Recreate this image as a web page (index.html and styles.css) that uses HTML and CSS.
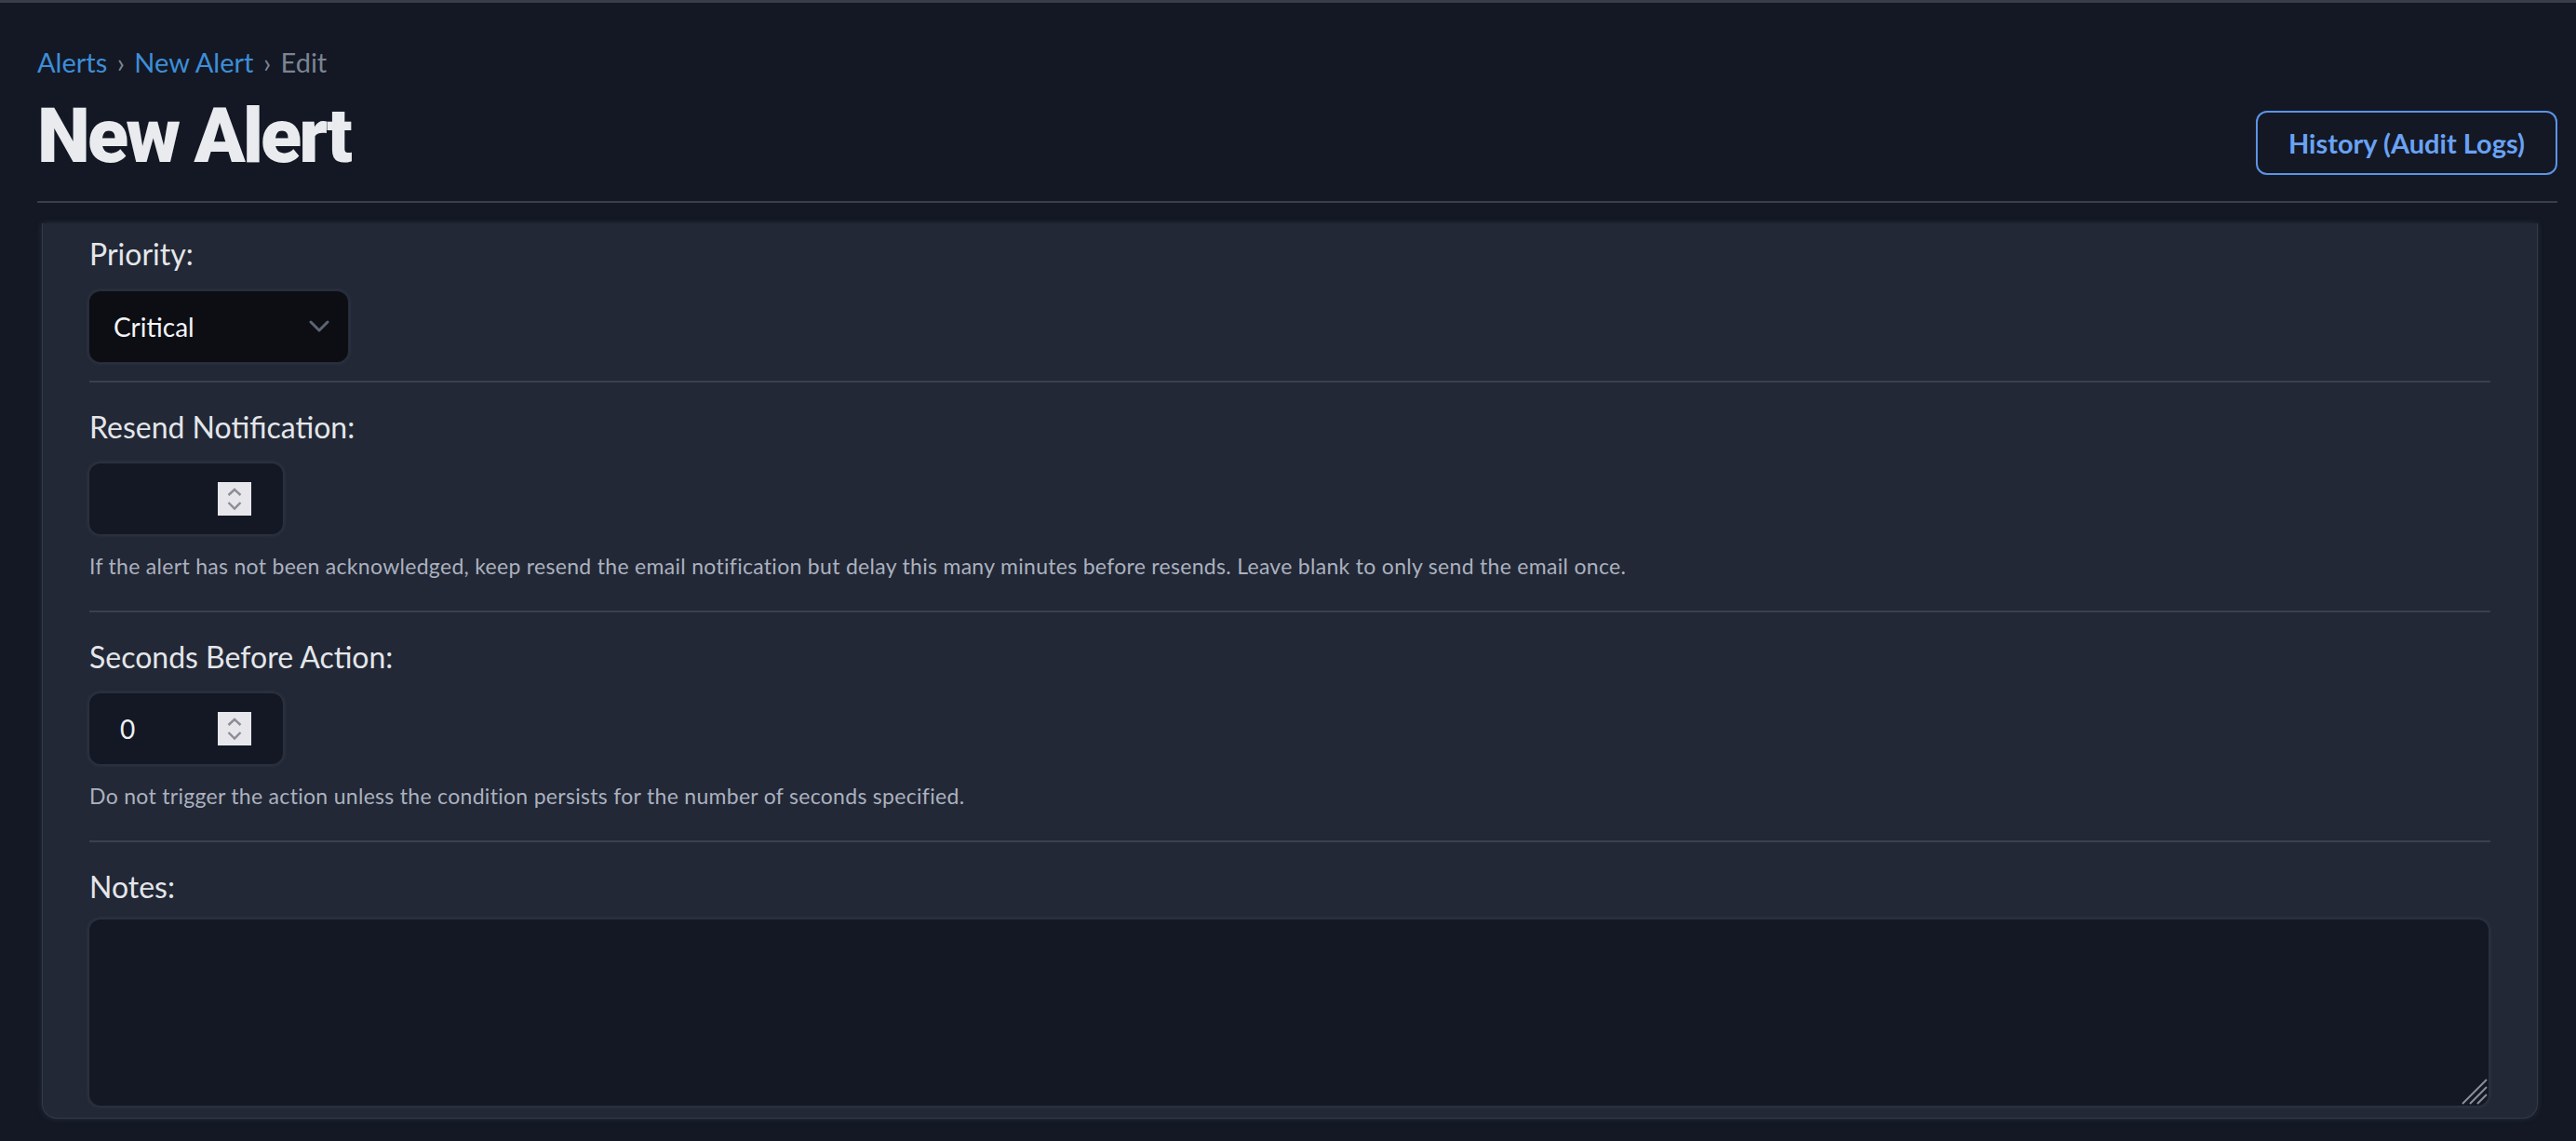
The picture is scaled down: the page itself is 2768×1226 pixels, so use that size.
FILE: index.html
```html
<!DOCTYPE html>
<html lang="en">
<head>
<meta charset="utf-8">
<title>New Alert</title>
<link rel="stylesheet" href="styles.css">
</head>
<body>
<div class="topline"></div>
<header class="page-header">
  <nav class="crumbs">
    <a class="crumb-link" href="#">Alerts</a>
    <span class="crumb-sep">›</span>
    <a class="crumb-link" href="#">New Alert</a>
    <span class="crumb-sep">›</span>
    <span class="crumb-current">Edit</span>
  </nav>
  <div class="title-row">
    <h1 class="page-title">New Alert</h1>
    <button class="btn-outline" type="button">History (Audit Logs)</button>
  </div>
  <hr class="rule">
</header>

<main class="card">
  <section class="field field-first">
    <label class="field-label" for="priority">Priority:</label>
    <div class="select-wrap">
      <select id="priority" class="select">
        <option>Critical</option>
        <option>High</option>
        <option>Medium</option>
        <option>Low</option>
      </select>
      <svg class="select-chevron" width="22" height="14" viewBox="0 0 22 14"><path d="M2 2 L11 11 L20 2" fill="none" stroke="#5d6473" stroke-width="3" stroke-linecap="round" stroke-linejoin="round"/></svg>
    </div>
  </section>

  <section class="field">
    <label class="field-label" for="resend">Resend Notification:</label>
    <div class="num-wrap">
      <input id="resend" class="num" type="number" value="">
      <span class="spin"><svg width="36" height="36" viewBox="0 0 36 36"><path d="M11.5 14 L18 8 L24.5 14" fill="none" stroke="#8d8c97" stroke-width="2.4"/><path d="M11.5 22 L18 28.5 L24.5 22" fill="none" stroke="#8d8c97" stroke-width="2.4"/></svg></span>
    </div>
    <p class="help">If the alert has not been acknowledged, keep resend the email notification but delay this many minutes before resends. Leave blank to only send the email once.</p>
  </section>

  <section class="field">
    <label class="field-label" for="seconds">Seconds Before Action:</label>
    <div class="num-wrap">
      <input id="seconds" class="num" type="number" value="0">
      <span class="spin"><svg width="36" height="36" viewBox="0 0 36 36"><path d="M11.5 14 L18 8 L24.5 14" fill="none" stroke="#8d8c97" stroke-width="2.4"/><path d="M11.5 22 L18 28.5 L24.5 22" fill="none" stroke="#8d8c97" stroke-width="2.4"/></svg></span>
    </div>
    <p class="help">Do not trigger the action unless the condition persists for the number of seconds specified.</p>
  </section>

  <section class="field field-last">
    <label class="field-label" for="notes">Notes:</label>
    <div class="textarea-wrap">
      <textarea id="notes" class="textarea"></textarea>
      <svg class="grip" width="28" height="28" viewBox="0 0 28 28"><path d="M1 27 L27 1 M9 27 L27 9 M17 27 L27 17" fill="none" stroke="#8a8e98" stroke-width="2"/></svg>
    </div>
  </section>
</main>
</body>
</html>
```

FILE: styles.css
```css
* { box-sizing: border-box; }

html, body {
  margin: 0;
  padding: 0;
}

body {
  background: #131824;
  color: #e6e8ec;
  font-family: Lato, "Open Sans", sans-serif;
  height: 1226px;
  overflow: hidden;
}

.topline {
  height: 3px;
  background: #393d4a;
}

.page-header {
  padding: 46px 20px 0 40px;
}

.crumbs {
  font-size: 29px;
  line-height: 35px;
  height: 35px;
  color: #7b8493;
  white-space: nowrap;
}

.crumb-link {
  color: #3e8ed8;
  text-decoration: none;
}

.crumb-sep {
  color: #7b8493;
  margin: 0 3px;
}

.crumb-current {
  color: #7b8493;
}

.title-row {
  margin-top: 22px;
  display: flex;
  justify-content: space-between;
  align-items: flex-end;
}

.page-title {
  margin: 0;
  font-family: Roboto, "Liberation Sans", sans-serif;
  font-weight: 900;
  font-size: 81px;
  line-height: 81px;
  letter-spacing: -2.9px;
  color: #e9ebef;
}

.btn-outline {
  width: 324px;
  height: 69px;
  border: 2px solid #5c94e6;
  border-radius: 12px;
  background: transparent;
  color: #6aa2f4;
  font-family: Lato, sans-serif;
  font-weight: 700;
  font-size: 29px;
  padding: 0;
  margin-bottom: -1px;
}

.rule {
  margin: 29px 0 0 0;
  border: 0;
  height: 2px;
  background: #393e4c;
}

.card {
  margin: 22px 41px 0 45px;
  background: #222836;
  border: 1px solid #353a48;
  border-top: 0;
  border-radius: 0 0 16px 16px;
  box-shadow: 0 0 6px rgba(80, 90, 110, 0.35);
  padding: 0 50px;
}

.field {
  padding: 29px 0 34px;
  border-bottom: 2px solid #3b4050;
}

.field-first {
  padding-top: 14px;
  padding-bottom: 20px;
}

.field-last {
  border-bottom: 0;
  padding-bottom: 13px;
}

.field-label {
  display: block;
  font-size: 32px;
  line-height: 38px;
  color: #e4e6ea;
}

.select-wrap {
  position: relative;
  width: 278px;
  height: 76px;
  margin-top: 21px;
}

.select {
  appearance: none;
  -webkit-appearance: none;
  width: 100%;
  height: 100%;
  border: 0;
  border-radius: 12px;
  background: #0c0e13;
  color: #f3f4f6;
  font-family: Lato, sans-serif;
  font-size: 28px;
  padding: 0 0 0 26px;
  box-shadow: 0 0 0 1px #262b37, 0 0 5px rgba(120, 130, 150, 0.35);
  outline: none;
}

.select-chevron {
  position: absolute;
  left: 236px;
  top: 31px;
  pointer-events: none;
}

.num-wrap {
  position: relative;
  width: 208px;
  height: 76px;
  margin-top: 20px;
}

.num {
  appearance: textfield;
  -moz-appearance: textfield;
  width: 100%;
  height: 100%;
  border: 0;
  border-radius: 12px;
  background: #131824;
  color: #eef0f3;
  font-family: Lato, sans-serif;
  font-size: 28px;
  padding: 0 0 0 33px;
  box-shadow: 0 0 0 1px #2a303d, 0 0 5px rgba(120, 130, 150, 0.35);
  outline: none;
}

.num::-webkit-inner-spin-button,
.num::-webkit-outer-spin-button {
  -webkit-appearance: none;
  margin: 0;
}

.spin {
  position: absolute;
  left: 138px;
  top: 20px;
  width: 36px;
  height: 36px;
  background: #e7e6eb;
  display: block;
}

.spin svg {
  display: block;
}

.help {
  margin: 20px 0 0;
  font-size: 23px;
  line-height: 28px;
  letter-spacing: 0.3px;
  color: #abb1bf;
}

.textarea-wrap {
  position: relative;
  margin-top: 16px;
  height: 200px;
  margin-right: 2px;
}

.textarea {
  display: block;
  width: 100%;
  height: 100%;
  resize: none;
  border: 0;
  border-radius: 12px;
  background: #131824;
  box-shadow: 0 0 0 1px #2a303d, 0 0 5px rgba(120, 130, 150, 0.35);
  outline: none;
}

.grip {
  position: absolute;
  right: 1px;
  bottom: 1px;
  pointer-events: none;
}
```
